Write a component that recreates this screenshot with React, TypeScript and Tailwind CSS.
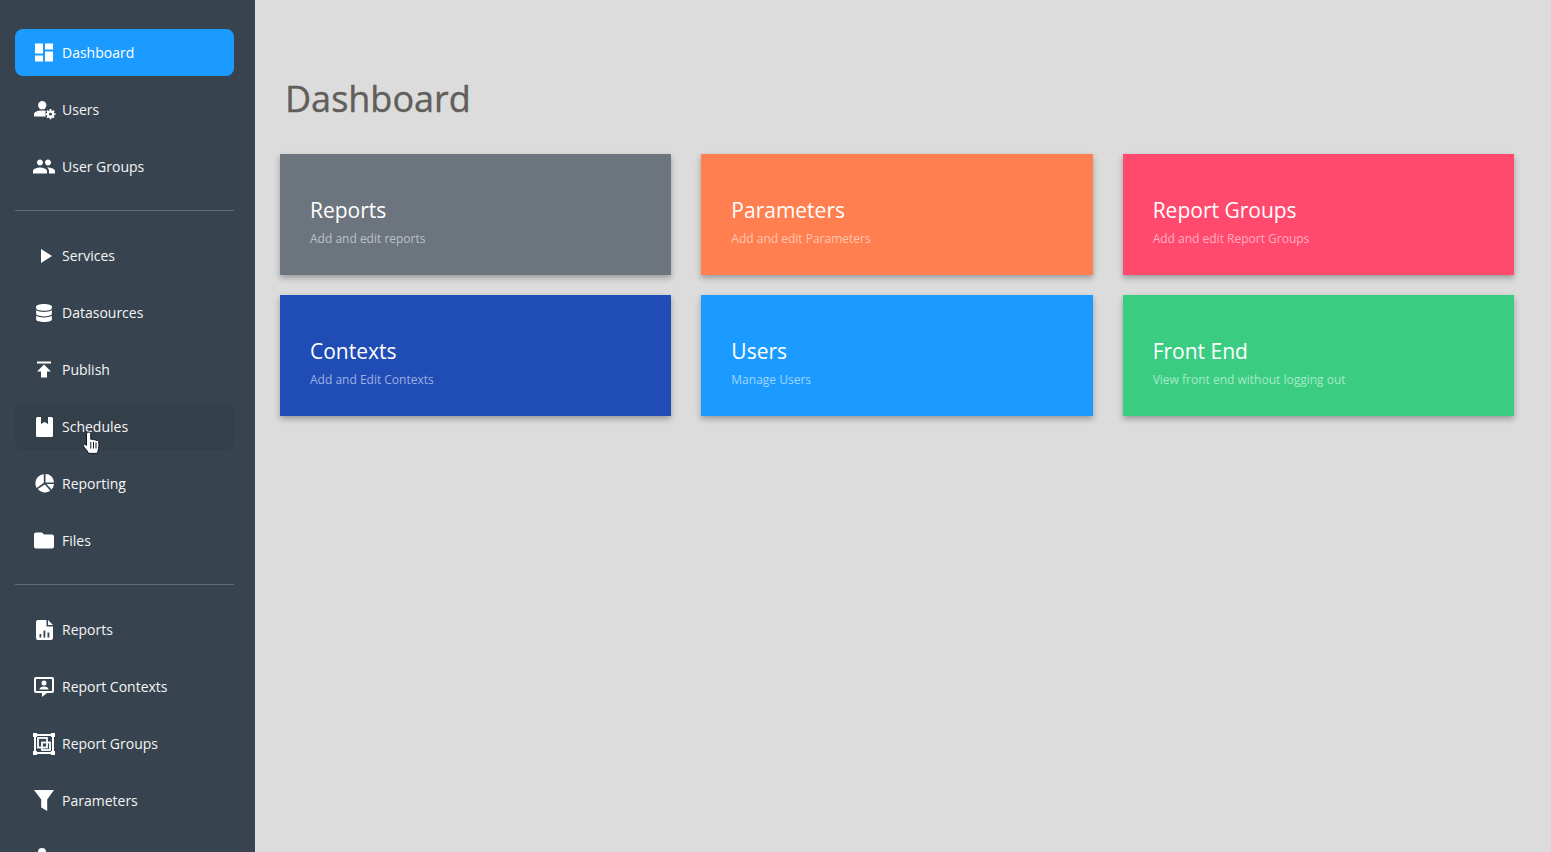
import React from "react";
import { MdDashboard, MdPeople, MdPlayArrow, MdPublish, MdFolder } from "react-icons/md";
import { FaDatabase } from "react-icons/fa";

const UserGear = () => (
  <svg width="24" height="20" viewBox="0 0 24 20" fill="#fff" className="ml-[2px]">
    <circle cx="9" cy="4.800" r="4.500" />
    <path d="M0 17v-2.500c0-2.500 4-4 9-4 1.500 0 3 .1 4 .5-1 1.500-1 4.500 0 6z" />
    <circle cx="18" cy="14.500" r="4" />
    <g stroke="#fff" strokeWidth="2">
      <path d="M18 9v11M12.500 14.500h11M14.200 10.700l7.600 7.600M21.800 10.700l-7.600 7.600" />
    </g>
    <circle cx="18" cy="14.500" r="1.600" fill="#37444f" />
  </svg>
);

const Funnel = () => (
  <svg width="20" height="21" viewBox="0 0 20 21" fill="#fff">
    <path d="M0 0h20l-6.800 9.500V21l-6-3.500V9.500z" />
  </svg>
);

const ReportFile = () => (
  <svg width="17" height="20" viewBox="0 0 17 20" fill="#fff">
    <path fillRule="evenodd" d="M2 0h8.500v6.500H17V18a2 2 0 0 1-2 2H2a2 2 0 0 1-2-2V2a2 2 0 0 1 2-2zM3.500 14v3.500h1.800V14zM7.500 10.500v7h1.800v-7zM11.500 12.500v5h1.800v-5z" />
    <path d="M12 0l5 5h-5z" />
  </svg>
);

const ContextIcon = () => (
  <svg width="20" height="20" viewBox="0 0 20 20" fill="#fff">
    <path fillRule="evenodd" d="M2 0h16a2 2 0 0 1 2 2v12a2 2 0 0 1-2 2h-5l-5 4v-4H2a2 2 0 0 1-2-2V2a2 2 0 0 1 2-2zM2 2v12h16V2z" />
    <circle cx="10" cy="6" r="2.500" />
    <path d="M5.500 12.500c0-2 2-3 4.500-3s4.500 1 4.500 3z" />
  </svg>
);

const GroupIcon = () => (
  <svg width="22" height="22" viewBox="0 0 22 22" fill="none" stroke="#fff">
    <rect x="2" y="2" width="18" height="18" strokeWidth="2" />
    <g fill="#fff" stroke="none">
      <rect x="0" y="0" width="4" height="4" />
      <rect x="18" y="0" width="4" height="4" />
      <rect x="0" y="18" width="4" height="4" />
      <rect x="18" y="18" width="4" height="4" />
    </g>
    <rect x="5" y="5" width="9" height="9.500" strokeWidth="1.800" />
    <rect x="9" y="9.500" width="8" height="7.500" strokeWidth="1.800" />
  </svg>
);

const BookIcon = () => (
  <svg width="17" height="20" viewBox="0 0 17 20" fill="#fff">
    <path d="M1.500 0H5v7l3.500-2L12 7V0h3.500A1.500 1.500 0 0 1 17 1.500v17a1.500 1.500 0 0 1-1.500 1.500h-14A1.500 1.500 0 0 1 0 18.500v-17A1.500 1.500 0 0 1 1.500 0z" />
  </svg>
);

const PieIcon = () => (
  <svg width="19" height="19" viewBox="0 0 19 19" fill="#fff">
    <path d="M8.800.300v8.500L1.700 14A9 9 0 0 1 8.800.300z" />
    <path d="M10.500 0A8.500 8.500 0 0 1 19 8.500h-8.500z" />
    <path d="M19 10a9 9 0 0 1-2.500 5.500L11.500 10z" />
    <path d="M9.800 10.500l5.500 6.300A9 9 0 0 1 2.800 15z" />
  </svg>
);

const HandCursor = () => (
  <svg width="17" height="24" viewBox="0 0 17 24" className="absolute left-[83px] top-[431px]">
    <path
      d="M3.800 2c.8-1.500 3.700-1.300 4 .5V8.500c1.100-.6 2.300-.4 2.700.4 1-.5 2.100-.3 2.600.6 1-.4 2.300-.1 2.600 1.200.4 2.200.3 4.700-.1 6.800-.2 1.700-.7 3.300-1.400 4.900H5.500C4.900 20.600 3.500 19 2 17.200c-.8-1-2-2.300-1.200-3.500.6-.9 1.900-.4 2.700.9V3c0-.4.100-.7.300-1z"
      fill="#fff"
      stroke="#0b1520"
      strokeWidth="1"
    />
    <path d="M7.800 11v6.500M10.500 11v6.500M13 11.500v6" stroke="#0b1520" strokeWidth="1" />
  </svg>
);

function NavItem({ icon, label, hover, active }: { icon: React.ReactNode; label: string; hover?: boolean; active?: boolean }) {
  return (
    <div
      className={
        "flex h-[47px] items-center rounded-lg text-[14px] text-[#f4f5f6] " +
        (active ? "bg-[#1b9bff] text-white " : "") +
        (hover ? "bg-[#344049] " : "")
      }
    >
      <div className="flex w-[47px] shrink-0 justify-end pr-[6px]"><div className="flex w-[24px] justify-center">{icon}</div></div>
      <span>{label}</span>
    </div>
  );
}

function Card({ title, desc, color, text }: { title: string; desc: string; color: string; text: string }) {
  return (
    <div className={"flex h-[121px] flex-col px-[30px] pt-[42px] shadow-[0_3px_6px_rgba(0,0,0,0.3)] " + color}>
      <h2 className="text-[21px] leading-[28px] text-white">{title}</h2>
      <p className={"mt-[5px] text-[12px] leading-[20px] " + text}>{desc}</p>
    </div>
  );
}

export default function App() {
  return (
    <div className="relative flex h-[852px] w-[1551px] overflow-hidden bg-[#dcdcdc] font-['Open_Sans',sans-serif]">
      <aside className="w-[255px] shrink-0 overflow-hidden bg-[#37444f] pl-[15px] pr-[21px] pt-[29px]">
        <div className="flex flex-col gap-[10px]">
          <NavItem active icon={<MdDashboard size={25} color="#fff" />} label="Dashboard" />
          <NavItem icon={<UserGear />} label="Users" />
          <NavItem icon={<MdPeople size={25} color="#fff" />} label="User Groups" />
        </div>
        <hr className="mt-[20px] mb-[21px] border-0 border-t border-[#5f6b75]" />
        <div className="flex flex-col gap-[10px]">
          <NavItem icon={<span className="ml-[2px]"><MdPlayArrow size={24} color="#fff" /></span>} label="Services" />
          <NavItem icon={<FaDatabase size={18} color="#fff" />} label="Datasources" />
          <NavItem icon={<MdPublish size={25} color="#fff" />} label="Publish" />
          <NavItem hover icon={<BookIcon />} label="Schedules" />
          <NavItem icon={<PieIcon />} label="Reporting" />
          <NavItem icon={<MdFolder size={25} color="#fff" />} label="Files" />
        </div>
        <hr className="mt-[20px] mb-[21px] border-0 border-t border-[#5f6b75]" />
        <div className="flex flex-col gap-[10px]">
          <NavItem icon={<ReportFile />} label="Reports" />
          <NavItem icon={<ContextIcon />} label="Report Contexts" />
          <NavItem icon={<GroupIcon />} label="Report Groups" />
          <NavItem icon={<Funnel />} label="Parameters" />
          <div className="flex h-[47px] justify-center">
            <div className="ml-[-165px] mt-[14px] size-[8px] rounded-full bg-white" />
          </div>
        </div>
      </aside>
      <main className="flex-1 pl-[25px] pr-[37px]">
        <h1 className="mt-[73px] ml-[5px] text-[36px] font-medium leading-[52px] text-[#625e5a] [-webkit-text-stroke:0.4px_#625e5a]">Dashboard</h1>
        <div className="mt-[29px] grid grid-cols-3 gap-x-[30px] gap-y-[20px]">
          <Card title="Reports" desc="Add and edit reports" color="bg-[#6c757d]" text="text-[#bcc1c5]" />
          <Card title="Parameters" desc="Add and edit Parameters" color="bg-[#ff7f50]" text="text-[#ffc6b0]" />
          <Card title="Report Groups" desc="Add and edit Report Groups" color="bg-[#ff4a6e]" text="text-[#ffacbd]" />
          <Card title="Contexts" desc="Add and Edit Contexts" color="bg-[#204cb5]" text="text-[#9db0e0]" />
          <Card title="Users" desc="Manage Users" color="bg-[#1b9bff]" text="text-[#a0d5ff]" />
          <Card title="Front End" desc="View front end without logging out" color="bg-[#3acd82]" text="text-[#a6e9c6]" />
        </div>
      </main>
      <HandCursor />
    </div>
  );
}
